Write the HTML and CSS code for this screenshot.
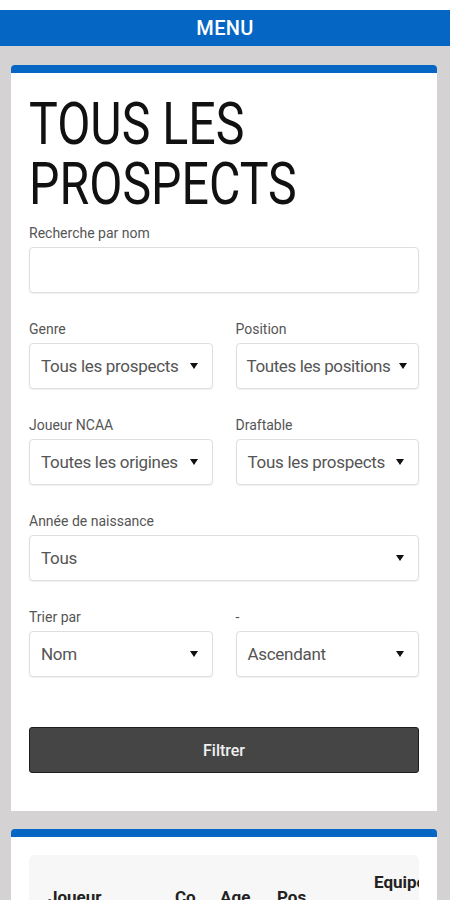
FILE: index.html
```html
<!DOCTYPE html>
<html lang="fr">
<head>
<meta charset="utf-8">
<title>Tous les prospects</title>
<link rel="stylesheet" href="styles.css">
</head>
<body>
<div class="topstrip"></div>
<header class="menubar">MENU</header>
<main class="page">
  <section class="card">
    <h1 class="title">TOUS LES<br>PROSPECTS</h1>
    <div class="field">
      <label class="lbl">Recherche par nom</label>
      <input class="input" type="text">
    </div>
    <div class="row">
      <div class="field">
        <label class="lbl">Genre</label>
        <div class="select"><span>Tous les prospects</span><i class="arrow"></i></div>
      </div>
      <div class="field">
        <label class="lbl">Position</label>
        <div class="select tight"><span>Toutes les positions</span><i class="arrow"></i></div>
      </div>
    </div>
    <div class="row">
      <div class="field">
        <label class="lbl">Joueur NCAA</label>
        <div class="select"><span>Toutes les origines</span><i class="arrow"></i></div>
      </div>
      <div class="field">
        <label class="lbl">Draftable</label>
        <div class="select"><span>Tous les prospects</span><i class="arrow"></i></div>
      </div>
    </div>
    <div class="field">
      <label class="lbl">Année de naissance</label>
      <div class="select"><span>Tous</span><i class="arrow"></i></div>
    </div>
    <div class="row">
      <div class="field">
        <label class="lbl">Trier par</label>
        <div class="select"><span>Nom</span><i class="arrow"></i></div>
      </div>
      <div class="field">
        <label class="lbl">-</label>
        <div class="select"><span>Ascendant</span><i class="arrow"></i></div>
      </div>
    </div>
    <button class="btn">Filtrer</button>
  </section>
  <section class="card card2">
    <div class="tablebox">
      <table class="tbl">
        <colgroup>
          <col class="w-joueur">
          <col class="w-co">
          <col class="w-age">
          <col class="w-pos">
          <col class="w-eq">
        </colgroup>
        <thead>
          <tr>
            <th class="c-joueur">Joueur</th>
            <th>Co</th>
            <th>Age</th>
            <th>Pos</th>
            <th class="c-eq">Equipe<br>actuelle</th>
          </tr>
        </thead>
      </table>
    </div>
  </section>
</main>
</body>
</html>
```
FILE: styles.css
```css
html, body {
  margin: 0;
  padding: 0;
}
body {
  background: #d4d2d2;
  font-family: Roboto, "Liberation Sans", sans-serif;
  color: #222;
  height: 900px;
  overflow: hidden;
}
.topstrip {
  height: 10px;
  background: #ffffff;
}
.menubar {
  height: 36px;
  background: #0566c4;
  color: #ffffff;
  font-size: 20px;
  font-weight: 500;
  line-height: 37px;
  text-align: center;
  letter-spacing: 0.3px;
}
.page {
  padding: 19px 13px 0 11px;
}
.card {
  background: #ffffff;
  border-top: 8px solid #0566c4;
  border-radius: 4px 4px 0 0;
  padding: 21px 18px 38px 18px;
}
.title {
  margin: 0 0 9px 0;
  font-family: Roboto, sans-serif;
  font-weight: 400;
  font-size: 58.5px;
  line-height: 60px;
  color: #111;
  transform: scaleX(0.825);
  transform-origin: left center;
  white-space: nowrap;
}
.field {
  display: flex;
  flex-direction: column;
  margin-bottom: 26px;
}
.lbl {
  font-size: 14px;
  line-height: 20px;
  color: #555;
  margin-bottom: 4px;
}
.input, .select {
  box-sizing: border-box;
  height: 46px;
  border: 1px solid #dedede;
  border-radius: 4px;
  background: #fff;
  box-shadow: 0 1px 2px rgba(0,0,0,0.06);
}
.input {
  width: 100%;
  font-size: 16px;
  padding: 0 10px;
}
.select {
  display: flex;
  align-items: center;
  justify-content: space-between;
  padding: 0 14px 0 11px;
  font-size: 17px;
  letter-spacing: -0.3px;
  color: #555;
  white-space: nowrap;
  overflow: hidden;
}
.select.tight {
  padding-right: 11px;
  padding-left: 10px;
  letter-spacing: -0.4px;
}
.arrow {
  flex: none;
  width: 0;
  height: 0;
  border-left: 4px solid transparent;
  border-right: 4px solid transparent;
  border-top: 6px solid #111;
  margin-left: 6px;
}
.row {
  display: grid;
  grid-template-columns: 1fr 1fr;
  column-gap: 23px;
}
.btn {
  display: block;
  width: 100%;
  box-sizing: border-box;
  height: 46px;
  margin-top: 24px;
  background: #454545;
  border: 1px solid #1e1e1e;
  border-radius: 3px;
  color: #f0f0f0;
  font-family: Roboto, sans-serif;
  font-size: 16px;
  font-weight: 500;
}
.card2 {
  margin-top: 18px;
  padding-top: 18px;
  padding-bottom: 0;
}
.tablebox {
  background: #f7f7f7;
  border-radius: 6px 6px 0 0;
  overflow: hidden;
  height: 100px;
}
.tbl {
  border-collapse: collapse;
  table-layout: fixed;
  width: 465px;
}
.w-joueur { width: 146px; }
.w-co { width: 45px; }
.w-age { width: 57px; }
.w-pos { width: 97px; }
.w-eq { width: 120px; }
.tbl th {
  vertical-align: middle;
  text-align: left;
  font-size: 17px;
  font-weight: 700;
  color: #222;
  padding: 18px 0 0 0;
  line-height: 26px;
  white-space: nowrap;
}
.tbl th.c-eq { padding-top: 14px; }
.tbl th.c-joueur { padding-left: 19px; }
```
